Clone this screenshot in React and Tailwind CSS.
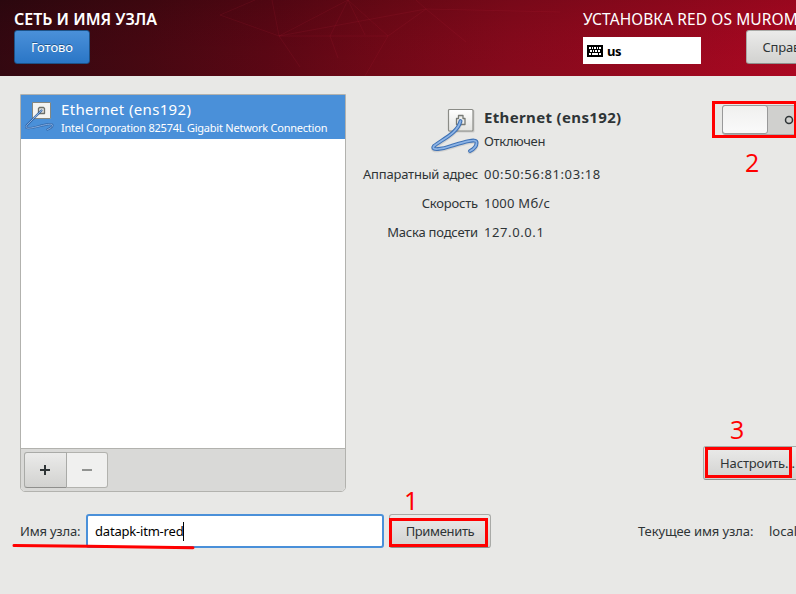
import React from "react";

const button =
  "flex shrink-0 items-center justify-center rounded-[3px] border border-[#a9aaa7] border-b-[#8f8f8d] bg-linear-to-b from-[#ebebea] to-[#d2d2d0] pt-0.5 text-[#2e3436] whitespace-nowrap";

function HeaderBackground() {
  return (
    <svg className="absolute inset-0 h-full w-full" viewBox="0 0 796 76" preserveAspectRatio="none">
      <defs>
        <linearGradient id="red" x1="0" y1="0" x2="796" y2="76" gradientUnits="userSpaceOnUse">
          <stop offset="0" stopColor="#2c0810" />
          <stop offset=".18" stopColor="#400811" />
          <stop offset=".34" stopColor="#560714" />
          <stop offset=".48" stopColor="#6d0917" />
          <stop offset=".64" stopColor="#830a1c" />
          <stop offset="1" stopColor="#aa0822" />
        </linearGradient>
        <linearGradient id="shade" x1="0" y1="0" x2="0" y2="1">
          <stop offset="0" stopColor="#200" stopOpacity=".12" />
          <stop offset="1" stopColor="#c00020" stopOpacity=".04" />
        </linearGradient>
      </defs>
      <path fill="url(#red)" d="M0 0H796V76H0z" />
      <path fill="url(#shade)" d="M0 0H796V76H0z" />
      <path
        fill="none"
        stroke="#c52a45"
        strokeOpacity=".12"
        d="M272 0L279 36L348 0L388 36L426 9L466 42M279 36L388 36L365 76M279 36L426 9L416 0M279 36L300 67M220 15L279 36M220 15L255 0M426 9L560 12M348 0L330 36L338 58M348 0L365 35"
      />
    </svg>
  );
}

function EthernetIcon({ className }) {
  const cable = "M29.500 14C27 26 10 33 3 39C-1 44 12 42 20 39C30 36 45 31 45.500 35C46 39 43 42 39 44";
  return (
    <svg className={className} viewBox="0 0 48 48" fill="none" strokeLinecap="round" strokeLinejoin="round">
      <defs>
        <linearGradient id="plate" x1="0" y1="0" x2="0" y2="1">
          <stop stopColor="#fff" />
          <stop offset="1" stopColor="#e3e3e0" />
        </linearGradient>
      </defs>
      <rect x="18" y="3" width="25.500" height="22.500" rx="1" fill="#000" opacity=".12" />
      <rect x="17.500" y="2.500" width="24.500" height="21.500" rx="1" fill="url(#plate)" stroke="#8a8b86" strokeWidth="1.200" />
      <path d="M25.500 17.500V11.500h2V8.500h4.500v3h2v6z" fill="#eeeeec" stroke="#777a75" strokeWidth="1.300" />
      <path d={cable} transform="translate(0 1)" stroke="#555" strokeOpacity=".16" strokeWidth="4.500" />
      <path d={cable} stroke="#3f72b5" strokeWidth="3.800" />
      <path d={cable} stroke="#8db4e6" strokeWidth="1.700" />
    </svg>
  );
}

function SmallEthernetIcon({ className }) {
  const cable = "M17.500 11.500L3 26C-1 31 8 29 14 27.500C20 26 28 24 28.500 26C28.500 28 26 29.500 23.500 30.500";
  return (
    <svg className={className} viewBox="0 0 32 32" fill="none" strokeLinecap="round" strokeLinejoin="round">
      <rect x="8.500" y="3.500" width="18" height="16" rx=".5" fill="#f3f3f1" stroke="#85877f" />
      <path d="M14.500 14.500V9.500l1-1h4l1 1v5z" fill="#e2e2df" stroke="#6c6f69" strokeWidth="1.300" />
      <path d={cable} stroke="#2f5f9e" strokeOpacity=".85" strokeWidth="2.300" />
      <path d={cable} stroke="#8db4e6" strokeWidth=".9" />
    </svg>
  );
}

function KeyboardIcon() {
  return (
    <svg className="h-3 w-4 shrink-0" viewBox="0 0 16 12" shapeRendering="crispEdges">
      <path d="M0 0h16v12H0z" />
      <path
        fill="#fff"
        d="M2 2h2v2h-2zM5 2h1v2h-1zM7 2h2v2h-2zM10 2h1v2h-1zM12 2h2v2h-2zM3 5h2v2h-2zM6 5h1v2h-1zM8 5h2v2h-2zM11 5h2v2h-2zM2 8h2v2h-2zM5 8h6v2h-6zM12 8h2v2h-2z"
      />
    </svg>
  );
}

function Header() {
  return (
    <header className="relative h-[76px] shrink-0 overflow-hidden text-white">
      <HeaderBackground />
      <div className="relative flex h-full pl-3.5 pt-[9px]">
        <div className="w-[569px] shrink-0">
          <h1 className="h-[21px] text-[16px] leading-[21px] font-semibold whitespace-nowrap">СЕТЬ И ИМЯ УЗЛА</h1>
          <button className="flex h-[34px] w-[76px] items-center justify-center rounded-[3px] border border-[#1c5187] bg-linear-to-b from-[#4a90d9] to-[#2a76c6] pt-0.5 text-[13px] tracking-[-0.1px] [text-shadow:0_-1px_#1f5890]">
            Готово
          </button>
        </div>
        <div className="w-[213px] shrink-0">
          <div className="h-[21px] text-[15.500px] leading-[21px] whitespace-nowrap tracking-[0.1px]">УСТАНОВКА RED OS MUROM</div>
          <div className="flex">
            <div className="mt-[7px] mr-[45px] flex h-[27px] w-[118px] shrink-0 items-center bg-white pl-1 text-[13px] font-bold text-black">
              <KeyboardIcon />
              <span className="mt-0.5 ml-1 tracking-[-0.5px]">us</span>
            </div>
            <button className={`${button} h-[34px] w-[84px] text-[13px] tracking-[-0.2px]`}>Справка</button>
          </div>
        </div>
      </div>
    </header>
  );
}

function DeviceList() {
  return (
    <section className="flex h-[398px] w-[326px] shrink-0 flex-col overflow-hidden rounded-b-[5px] border border-[#b2b2ae] bg-white">
      <div className="flex h-11 shrink-0 bg-[#4a90d9] text-white">
        <SmallEthernetIcon className="mt-1 ml-[3px] h-8 w-8" />
        <div className="ml-[5px] pt-1 whitespace-nowrap">
          <div className="h-[21px] text-[15px] leading-5 tracking-[0.35px]">Ethernet (ens192)</div>
          <div className="h-4 text-[11px] leading-4 tracking-[-0.23px]">Intel Corporation 82574L Gigabit Network Connection</div>
        </div>
      </div>
      <div className="flex-1" />
      <div className="flex h-[43px] items-start border-t border-[#b2b2ae] bg-[#d9d9d7] pt-[3px] pl-[3px]">
        <button className={`${button} h-9 w-[43px] rounded-r-none pr-0.5 pb-0.5`}>
          <svg className="h-3 w-3" viewBox="0 0 12 12" stroke="#2e3436" strokeWidth="2"><path d="M1 6h10M6 1v10" /></svg>
        </button>
        <button className="flex h-9 w-[41px] items-center justify-center rounded-r-[3px] border border-l-0 border-[#b2b2ae] bg-[#f0f0ef]">
          <svg className="h-3 w-3" viewBox="0 0 12 12" stroke="#919391" strokeWidth="2"><path d="M1 6h10" /></svg>
        </button>
      </div>
    </section>
  );
}

const properties = [
  ["Аппаратный адрес", "00:50:56:81:03:18"],
  ["Скорость", "1000 Мб/с"],
  ["Маска подсети", "127.0.0.1"],
];

function DeviceDetails() {
  return (
    <section className="flex h-[398px] w-[450px] shrink-0 flex-col">
      <div className="flex h-[66px]">
        <EthernetIcon className="mt-[13px] ml-[85px] h-12 w-12 shrink-0" />
        <div className="ml-[5px] w-[233px] shrink-0 pt-[11px]">
          <div className="h-6 text-[15px] leading-6 font-bold whitespace-nowrap tracking-[0.35px]">Ethernet (ens192)</div>
          <div className="h-6 text-[13px] leading-6 tracking-[-0.3px]">Отключен</div>
        </div>
        <div className="mt-[11px] ml-[5px] flex h-[30px] w-[94px] shrink-0 rounded-[3px] border border-[#aaa] bg-[#d0d0ce]">
          <div className="-m-px h-[29px] w-[46px] rounded-[3px] border border-[#999] bg-linear-to-b from-[#f0f0ef] to-[#fafafa]" />
          <svg className="mt-[9px] ml-[17px] h-2.5 w-2.5" viewBox="0 0 10 10" fill="none" stroke="#2e3436" strokeWidth="1.500"><circle cx="5" cy="5" r="3.500" /></svg>
        </div>
      </div>
      <dl className="text-[13px] leading-[29px] whitespace-nowrap">
        {properties.map(([name, value]) => (
          <div key={name} className="flex h-[29px]">
            <dt className="w-[132px] text-right tracking-[-0.2px]">{name}</dt>
            <dd className={value.includes(" ") ? "ml-1.5 tracking-[0.25px]" : "ml-1.5 tracking-[0.6px]"}>{value}</dd>
          </div>
        ))}
      </dl>
      <button className={`${button} mt-auto mr-[-16px] mb-3 h-[34px] w-[109px] self-end text-[13px] tracking-[-0.15px]`}>
        Настроить...
      </button>
    </section>
  );
}

function HostnameRow() {
  return (
    <div className="mt-[22px] flex h-[34px] items-center pl-5 text-[13px] whitespace-nowrap">
      <label className="w-[66px] shrink-0 pt-0.5 tracking-[-0.2px]">Имя узла:</label>
      <div className="flex h-[34px] w-[298px] shrink-0 items-center rounded-[3px] border-2 border-[#4a90d9] bg-white pl-[7px] text-black">
        <span className="pt-0.5 tracking-[-0.2px]">datapk-itm-red</span>
        <span className="h-[19px] w-px bg-black" />
      </div>
      <button className={`${button} ml-[5px] h-[34px] w-[102px] tracking-[-0.35px]`}>Применить</button>
      <span className="ml-[147px] w-[131px] shrink-0 pt-0.5 tracking-[-0.1px]">Текущее имя узла:</span>
      <span className="pt-0.5">localhost</span>
    </div>
  );
}

function Annotations() {
  return (
    <div className="pointer-events-none absolute inset-0 font-['Open_Sans','Noto_Sans',sans-serif] text-[25px] leading-6 text-[#ff0000]">
      <div className="absolute top-[101px] left-[712px] h-[37px] w-[85px] border-3 border-[#ff0000]" />
      <div className="absolute top-[518px] left-[389px] h-[29px] w-[99px] border-3 border-[#ff0000]" />
      <div className="absolute top-[447px] left-[705px] h-[31px] w-[87px] border-3 border-[#ff0000]" />
      <span className="absolute top-[488px] left-[404px] font-['Noto_Sans',sans-serif]">1</span>
      <span className="absolute top-[150px] left-[745px]">2</span>
      <span className="absolute top-[417px] left-[730px]">3</span>
      <svg className="absolute top-[540px] left-2 h-3 w-[200px]" viewBox="0 0 200 12">
        <path d="M6 5.500L80 6.300L185 7.700" fill="none" stroke="#ff0000" strokeWidth="3" strokeLinecap="round" />
      </svg>
    </div>
  );
}

export default function App() {
  return (
    <main className="relative flex h-[594px] w-[796px] flex-col overflow-hidden bg-[#e8e8e6] font-['Noto_Sans',sans-serif] text-[#2e3436]">
      <Header />
      <div className="mt-[18px] flex shrink-0 pl-5">
        <DeviceList />
        <DeviceDetails />
      </div>
      <HostnameRow />
      <Annotations />
    </main>
  );
}
